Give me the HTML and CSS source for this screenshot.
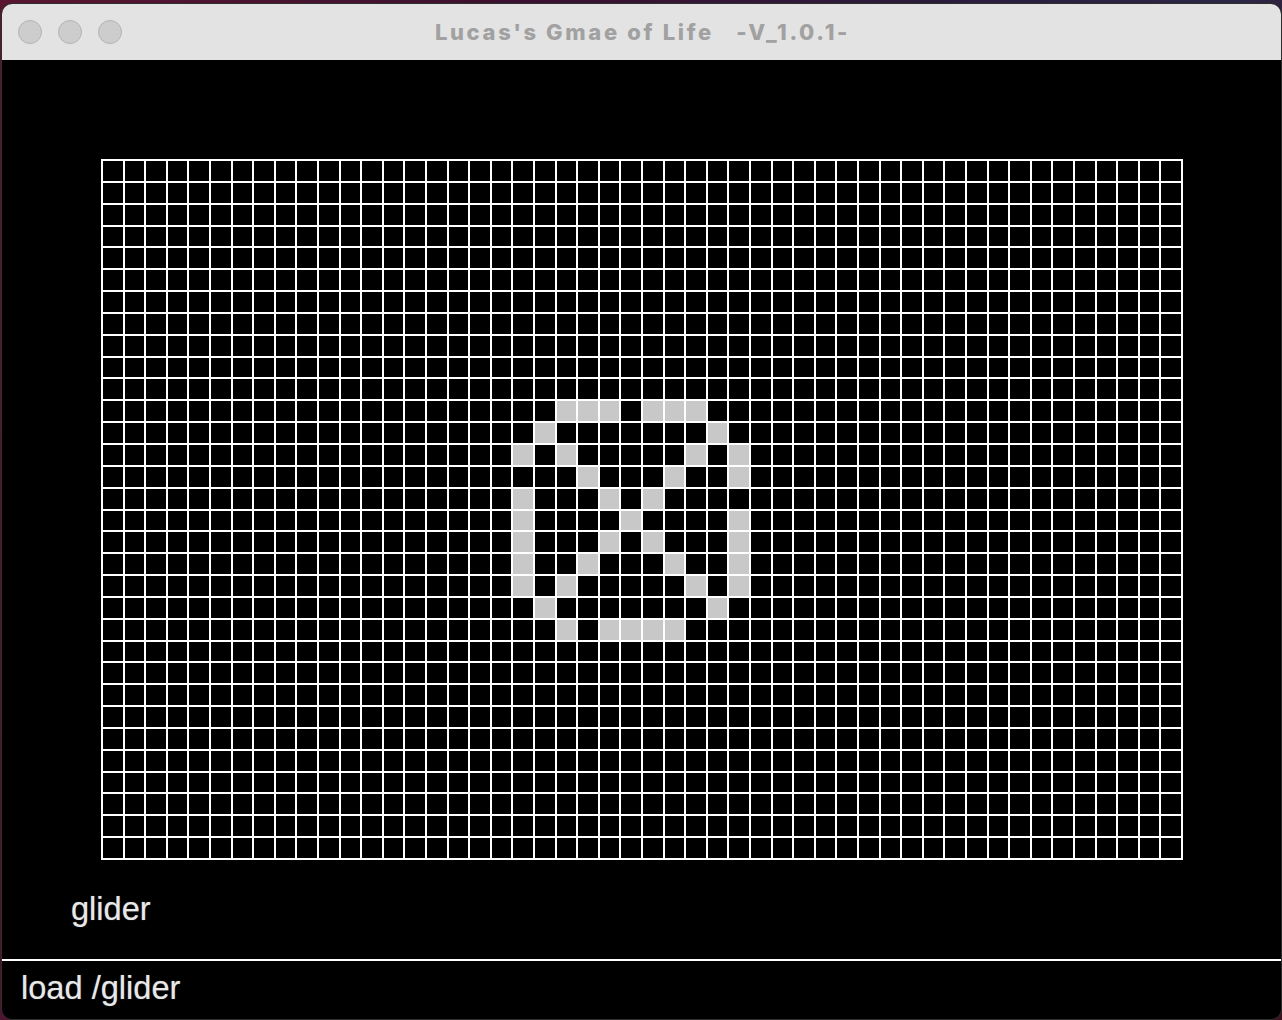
FILE: index.html
```html
<!DOCTYPE html>
<html lang="en">
<head>
<meta charset="utf-8">
<title>Lucas's Gmae of Life</title>
<link rel="stylesheet" href="styles.css">
</head>
<body>
<div class="window">
  <div class="titlebar">
    <div class="lights">
      <span class="light"></span>
      <span class="light"></span>
      <span class="light"></span>
    </div>
    <div class="title">Lucas's Gmae of Life   -V_1.0.1-</div>
    <div></div>
  </div>
  <div class="content">
    <div class="board" id="board"></div>
    <div class="label">glider</div>
    <div class="command">load /glider</div>
  </div>
</div>
<script src="script.js"></script>
</body>
</html>
```

FILE: styles.css
```css
html, body {
  margin: 0;
  padding: 0;
}
body {
  width: 1282px;
  height: 1020px;
  overflow: hidden;
  background: linear-gradient(100deg, #5a1630 0%, #3c1030 35%, #2a1c3c 65%, #2c2646 85%, #3a1420 100%);
}
.window {
  box-sizing: border-box;
  margin: 3px 0 0 1px;
  width: 1281px;
  height: 1017px;
  border: 1px solid #2e2e2e;
  border-radius: 11px;
  overflow: hidden;
  background: #000;
  display: flex;
  flex-direction: column;
}
.titlebar {
  height: 56px;
  flex: none;
  background: #e3e3e3;
  display: grid;
  grid-template-columns: 1fr auto 1fr;
  align-items: center;
}
.lights {
  display: flex;
  gap: 16px;
  padding-left: 16px;
}
.light {
  width: 22px;
  height: 22px;
  border-radius: 50%;
  background: #cdcdcd;
  border: 1px solid #b4b4b4;
}
.title {
  font-family: Inter, "Liberation Sans", sans-serif;
  font-weight: 800;
  font-size: 22px;
  letter-spacing: 2.65px;
  color: #a1a1a1;
  white-space: pre;
  padding-left: 2px;
}
.content {
  flex: 1;
  display: flex;
  flex-direction: column;
  padding-top: 99px;
}
.board {
  box-sizing: border-box;
  margin-left: 99px;
  width: 1082px;
  height: 701px;
  padding: 2px;
  gap: 2px;
  background: #fff;
  display: grid;
  grid-template-columns: repeat(50, 1fr);
  grid-template-rows: repeat(32, 1fr);
}
.cell {
  background: #000;
}
.cell.alive {
  background: #c8c8c8;
}
.label, .command {
  font-family: "Liberation Sans", Arial, sans-serif;
  font-size: 32.6px;
  line-height: 36px;
  color: #e8e8e8;
  text-shadow: 0 0 1px rgba(255, 255, 255, 0.45);
}
.label {
  margin-top: 31px;
  padding-left: 69px;
}
.command {
  margin-top: auto;
  border-top: 2px solid #fff;
  padding: 9px 0 13px 19px;
}
```

FILE: script.js
```js
const live = {
  11: [21, 22, 23, 25, 26, 27],
  12: [20, 28],
  13: [19, 21, 27, 29],
  14: [22, 26, 29],
  15: [19, 23, 25],
  16: [19, 24, 29],
  17: [19, 23, 25, 29],
  18: [19, 22, 26, 29],
  19: [19, 21, 27, 29],
  20: [20, 28],
  21: [21, 23, 24, 25, 26]
};
const board = document.getElementById('board');
for (let r = 0; r < 32; r++) {
  for (let c = 0; c < 50; c++) {
    const cell = document.createElement('div');
    cell.className = 'cell';
    if (live[r] && live[r].includes(c)) cell.classList.add('alive');
    board.appendChild(cell);
  }
}
```
